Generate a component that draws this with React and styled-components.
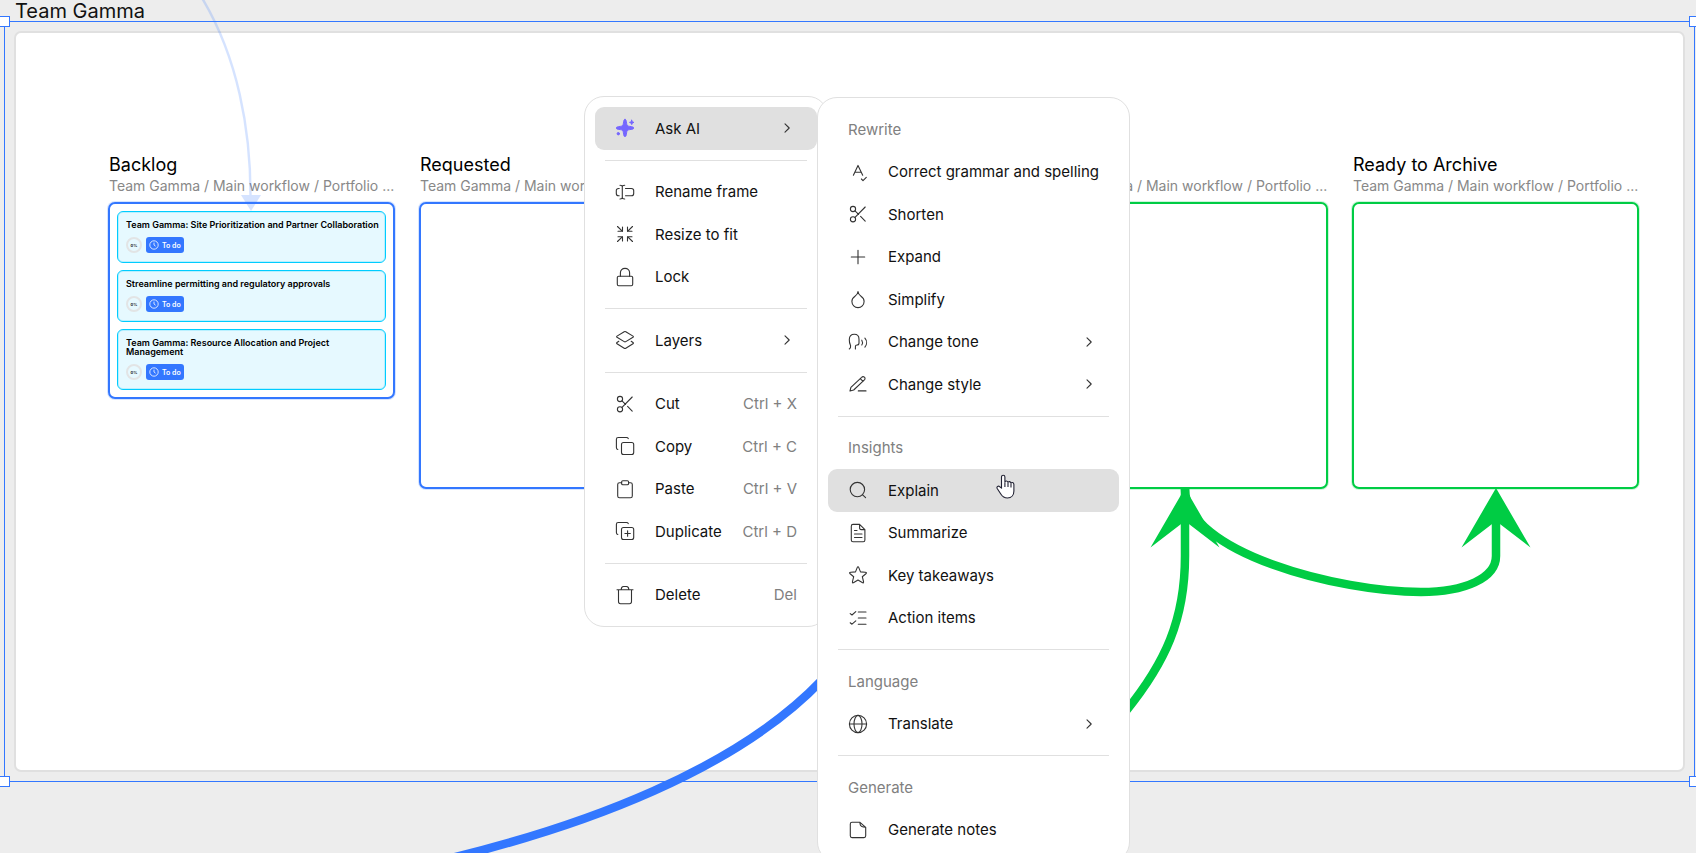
import React from "react";
import styled, { createGlobalStyle } from "styled-components";

const BLUE = "#3377ff";
const GREEN = "#00cc44";

const GlobalStyle = createGlobalStyle`
  * { box-sizing: border-box; }
  body {
    margin: 0;
    background: #ededed;
    font-family: Inter, "Liberation Sans", sans-serif;
    color: #111;
  }
`;

/* ---------- canvas ---------- */

const Canvas = styled.main`
  position: relative;
  display: flex;
  flex-direction: column;
  min-height: 100vh;
  padding: 0 11px 81px 14px;
  overflow: hidden;
  background: #ededed;
`;

const FrameTitle = styled.h1`
  margin: 0;
  padding-left: 1px;
  height: 31px;
  font-size: 20px;
  font-weight: 400;
  line-height: 22px;
`;

const Frame = styled.section`
  position: relative;
  flex: 1;
  padding: 121px 44px 40px 92px;
  border: 2px solid #e0e0e0;
  border-radius: 7px;
  background: #fff;
`;

const Selection = styled.div`
  position: absolute;
  inset: -12px;
  border: 1px solid ${BLUE};
  pointer-events: none;
`;

const Handle = styled.span`
  position: absolute;
  width: 11px;
  height: 11px;
  border: 1px solid ${BLUE};
  background: #fff;
  ${(p) => p.$v}: -6px;
  ${(p) => p.$h}: -6px;
`;

const Columns = styled.div`
  display: grid;
  grid-template-columns: repeat(5, 1fr);
  column-gap: 24px;
  align-items: start;
`;

const Column = styled.article`
  grid-column: ${(p) => p.$slot};
  grid-row: 1;
  min-width: 0;
`;

const ColumnTitle = styled.h2`
  margin: 0;
  padding-left: 1px;
  min-height: 22px;
  font-size: 18px;
  font-weight: 400;
  line-height: 22px;
  color: #000;
`;

const ColumnPath = styled.p`
  margin: 0 0 6px;
  padding-left: 1px;
  font-size: 14px;
  line-height: 20px;
  color: #888;
  white-space: nowrap;
`;

const ColumnBox = styled.div`
  display: flex;
  flex-direction: column;
  gap: 7px;
  padding: 7px;
  border: 2px solid ${(p) => p.$color};
  border-radius: 7px;
  background: #fff;
  box-shadow: 0 0 0 1px ${(p) => p.$color}33;
  ${(p) => p.$square && "aspect-ratio: 1;"}
`;

const Card = styled.div`
  display: flex;
  flex-direction: column;
  gap: 8px;
  padding: 8px 4px 9px 8px;
  border: 1px solid #00ccff;
  border-radius: 6px;
  background: #e6f9ff;
  box-shadow: inset 0 0 0 1px #00ccff33;
`;

const CardTitle = styled.h3`
  margin: 0;
  font-size: 9px;
  font-weight: 600;
  line-height: 9px;
  color: #000;
`;

const CardMeta = styled.div`
  display: flex;
  gap: 4px;
`;

const Progress = styled.span`
  display: grid;
  place-items: center;
  width: 16px;
  height: 16px;
  border: 2px solid #e2e4e5;
  border-radius: 50%;
  font-size: 4px;
  font-weight: 700;
`;

const Status = styled.span`
  display: flex;
  align-items: center;
  gap: 3px;
  height: 16px;
  padding: 0 3px;
  border-radius: 3px;
  background: ${BLUE};
  color: #fff;
  font-size: 7px;
  font-weight: 600;
`;

const Connectors = styled.svg`
  position: absolute;
  top: 0;
  left: 0;
  pointer-events: none;
`;

/* ---------- menus ---------- */

const Menu = styled.div`
  position: absolute;
  top: ${(p) => p.$top}px;
  left: ${(p) => p.$left}px;
  display: flex;
  flex-direction: column;
  width: ${(p) => p.$width}px;
  height: ${(p) => p.$height}px;
  padding: 10px;
  border: 1px solid #e0e0e0;
  border-radius: 20px;
  background: #fff;
`;

const Divider = styled.hr`
  flex: none;
  height: 1px;
  margin: 10px;
  border: 0;
  background: #e0e0e0;
`;

const MenuHeading = styled.h4`
  flex: 1;
  display: flex;
  align-items: center;
  margin: 0;
  padding: 0 20px;
  font-size: 15px;
  font-weight: 400;
  color: #808080;
`;

const Item = styled.button`
  flex: 1;
  display: flex;
  align-items: center;
  gap: 20px;
  padding: 0 20px;
  border: 0;
  border-radius: 9px;
  background: ${(p) => (p.$active ? "#e0e0e0" : "transparent")};
  color: #111;
  font: inherit;
  font-size: 15px;
  text-align: left;
  white-space: nowrap;
  cursor: pointer;
`;

const ItemLabel = styled.span`
  flex: 1;
`;

const Shortcut = styled.kbd`
  font: inherit;
  color: #808080;
`;

const IconSvg = styled.svg`
  flex: none;
  fill: none;
  stroke: #333;
  stroke-width: 1.1;
  stroke-linecap: round;
  stroke-linejoin: round;
`;

const Pointer = styled.svg`
  position: absolute;
  top: 376px;
  left: 178px;
  pointer-events: none;
`;

const ICONS = {
  ai: (
    <g fill="#7566ff" stroke="#7566ff" strokeWidth="1">
      <path d="M10 1.4C11.2 1.4 11.3 3 11.6 5.2C11.9 7.4 12.6 8.1 14.8 8.4C17 8.7 18.7 8.8 18.7 10S17 11.3 14.8 11.6C12.6 11.9 11.9 12.6 11.6 14.8C11.3 17 11.2 18.6 10 18.6S8.7 17 8.4 14.8C8.1 12.6 7.4 11.9 5.2 11.6C3 11.3 1.3 11.2 1.3 10S3 8.7 5.2 8.4C7.4 8.1 8.1 7.4 8.4 5.2C8.7 3 8.8 1.4 10 1.4Z" />
      <path d="M16.7 2.2L17.3 3.8L18.9 4.4L17.3 5L16.7 6.6L16.1 5L14.5 4.4L16.1 3.8Z" />
      <circle cx="3.3" cy="15.7" r="1.2" />
    </g>
  ),
  rename: (
    <>
      <path d="M5 3.3C6.4 3.3 7.3 3.8 7.3 4.8V15.6C7.3 16.5 6.4 17 5 17M9.7 3.3C8.2 3.3 7.3 3.8 7.3 4.8M9.7 17C8.2 17 7.3 16.5 7.3 15.6" />
      <path d="M4.2 6.5H3.7C2 6.5 1.3 7.6 1.3 8.6V11.4C1.3 12.8 2 13.7 3.7 13.7H4.2M10.5 6.5H16.4C18 6.5 18.7 7.4 18.7 8.6V11.4C18.7 12.8 18 13.7 16.4 13.7H10.5" />
    </>
  ),
  resize: (
    <path d="M2.5 2.5L7.5 7.3M3 7.3H7.5V3M17.5 2.5L12.5 7.3M17 7.3H12.5V3M2.5 17.5L7.5 12.7M3 12.7H7.5V17M17.5 17.5L12.5 12.7M17 12.7H12.5V17" />
  ),
  lock: (
    <>
      <rect x="2.3" y="9.2" width="15.4" height="9.5" rx="1.4" />
      <path d="M5.4 9.2V5.8C5.4 3 7.3 1.4 10 1.4S14.6 3 14.6 5.8V9.2" />
    </>
  ),
  layers: (
    <path d="M9.2 1.8Q10 1.3 10.8 1.8L18 6.1Q18.8 6.7 18 7.3L10.8 11.6Q10 12.1 9.2 11.6L2 7.3Q1.2 6.7 2 6.1ZM3.8 11.3L2 12.5Q1.2 13.2 2 13.7L9.2 18.2Q10 18.7 10.8 18.2L18 13.7Q18.8 13.2 18 12.5L16.2 11.3" />
  ),
  scissors: (
    <>
      <circle cx="5" cy="5" r="2.6" />
      <circle cx="5" cy="15.3" r="2.6" />
      <path d="M7 6.8L10.6 10.3M17.2 3L7 13.4M12.6 12.4L17.2 17.2" />
    </>
  ),
  copy: (
    <>
      <rect x="6.5" y="6.5" width="12.2" height="12" rx="2" />
      <path d="M2.8 13.5C1.7 13.2 1.4 12.5 1.4 11.5V3.2C1.4 2 2 1.5 3.2 1.5H11.5C12.5 1.5 13 1.7 13.3 2.6" />
    </>
  ),
  paste: (
    <>
      <path d="M6.7 3.7H4.5C3.2 3.7 2.7 4.4 2.7 5.5V17C2.7 18.2 3.3 18.8 4.5 18.8H15.5C16.7 18.8 17.3 18.2 17.3 17V5.5C17.3 4.4 16.7 3.7 15.5 3.7H13.5" />
      <rect x="6.6" y="1.7" width="7" height="4" rx="1.3" />
    </>
  ),
  duplicate: (
    <>
      <rect x="6.5" y="6.5" width="12.2" height="12" rx="2" />
      <path d="M2.8 13.5C1.7 13.2 1.4 12.5 1.4 11.5V3.2C1.4 2 2 1.5 3.2 1.5H11.5C12.5 1.5 13 1.7 13.3 2.6M12.6 9.8V15.2M9.9 12.5H15.3" />
    </>
  ),
  trash: (
    <path d="M2 4.7H18M3.5 4.7V16.6C3.5 18 4.2 18.7 5.5 18.7H14.5C15.8 18.7 16.5 18 16.5 16.6V4.7M6.2 4.7C6.2 2.4 7 1.5 8.5 1.5H11.5C13 1.5 13.8 2.4 13.8 4.7" />
  ),
  grammar: (
    <path d="M5.4 13.3L10 3.4L14.7 13.3M7 10.2H13.1M13.4 17L15 18.6L18.3 15.4" />
  ),
  plus: <path d="M10 3.3V16.7M3.3 10H16.7" />,
  drop: (
    <path d="M10 2.5C10.2 4.8 11 6 13 7.3C15 8.6 16.1 10.4 16.1 12.5A6.1 6.1 0 0 1 3.9 12.5C3.9 10.4 5 8.6 7 7.3C9 6 9.8 4.8 10 2.5Z" />
  ),
  tone: (
    <path d="M1.3 17C2.3 16.4 2.8 15.2 2.6 13.7C1.7 11.7 1.2 9.6 1.3 7.4C1.4 4.3 3.4 2.3 6.3 2.3C9.3 2.3 11 4.3 11 7.3V11C11 12.3 10.3 13 9 13C7.8 13 7.4 13.6 7.4 14.5V17M13.8 8.2C14.6 9.5 14.6 11.6 13.8 13M16.9 6.2C19.1 8.8 19.1 12.5 16.9 15.1" />
  ),
  pen: (
    <path d="M2 17L2.9 13.3L13.6 3.3C14.5 2.4 15.5 2.4 16.4 3.2C17.3 4.1 17.2 5.1 16.4 5.9L5.7 16ZM12.3 4.7L15 7.3M10.3 16.9H18" />
  ),
  search: (
    <>
      <circle cx="9.4" cy="9.6" r="7.2" />
      <path d="M14.6 14.8L17.6 17.6" />
    </>
  ),
  doc: (
    <path d="M11.6 1.4H5C3.8 1.4 3.3 2.1 3.3 3.2V16.9C3.3 18 3.9 18.7 5 18.7H15.2C16.4 18.7 16.9 18 16.9 16.9V6.6ZM11.6 1.4V5C11.6 6.1 12.1 6.6 13.2 6.6H16.9M6.5 7.5H9M6.5 11H14M6.5 14.5H14" />
  ),
  star: (
    <path d="M10 1.8C10.4 1.8 10.6 2.1 10.8 2.6L12.5 6.9L17.2 7.3C18.6 7.4 18.8 8 17.9 8.8L14.3 11.7L15.5 16.5C15.8 17.8 15.3 18.2 14.2 17.5L10 15L5.8 17.5C4.7 18.2 4.2 17.8 4.5 16.5L5.7 11.7L2.1 8.8C1.2 8 1.4 7.4 2.8 7.3L7.5 6.9L9.2 2.6C9.4 2.1 9.6 1.8 10 1.8Z" />
  ),
  checklist: (
    <path d="M10.3 4H18M10.3 10H18M10.3 16.2H18M2.2 5.6L4 7L7.8 3.7M2.2 14.8L4 16.2L7.8 12.9" />
  ),
  globe: (
    <>
      <circle cx="10" cy="10" r="8.6" />
      <ellipse cx="10" cy="10" rx="4" ry="8.6" />
      <path d="M1.4 10H18.6" />
    </>
  ),
  note: (
    <path d="M12 2.3H4C2.8 2.3 2.3 2.9 2.3 4V15.8C2.3 17 2.9 17.6 4 17.6H16C17.2 17.6 17.7 17 17.7 15.8V7.3ZM12 2.3V3.8C12.2 6 13.2 7.2 17.7 7.3" />
  ),
  chevron: <path d="M8 5.8L12.2 10L8 14.2" />,
};

function Icon({ name }) {
  return (
    <IconSvg width="20" height="20" viewBox="0 0 20 20" aria-hidden="true">
      {ICONS[name]}
    </IconSvg>
  );
}

function MenuItem({ icon, label, shortcut, submenu, active }) {
  return (
    <Item type="button" role="menuitem" $active={active}>
      <Icon name={icon} />
      <ItemLabel>{label}</ItemLabel>
      {shortcut && <Shortcut>{shortcut}</Shortcut>}
      {submenu && <Icon name="chevron" />}
    </Item>
  );
}

const MAIN_MENU = [
  { items: [{ icon: "ai", label: "Ask AI", submenu: true, active: true }] },
  {
    items: [
      { icon: "rename", label: "Rename frame" },
      { icon: "resize", label: "Resize to fit" },
      { icon: "lock", label: "Lock" },
    ],
  },
  { items: [{ icon: "layers", label: "Layers", submenu: true }] },
  {
    items: [
      { icon: "scissors", label: "Cut", shortcut: "Ctrl + X" },
      { icon: "copy", label: "Copy", shortcut: "Ctrl + C" },
      { icon: "paste", label: "Paste", shortcut: "Ctrl + V" },
      { icon: "duplicate", label: "Duplicate", shortcut: "Ctrl + D" },
    ],
  },
  { items: [{ icon: "trash", label: "Delete", shortcut: "Del" }] },
];

const AI_MENU = [
  {
    heading: "Rewrite",
    items: [
      { icon: "grammar", label: "Correct grammar and spelling" },
      { icon: "scissors", label: "Shorten" },
      { icon: "plus", label: "Expand" },
      { icon: "drop", label: "Simplify" },
      { icon: "tone", label: "Change tone", submenu: true },
      { icon: "pen", label: "Change style", submenu: true },
    ],
  },
  {
    heading: "Insights",
    items: [
      { icon: "search", label: "Explain", active: true },
      { icon: "doc", label: "Summarize" },
      { icon: "star", label: "Key takeaways" },
      { icon: "checklist", label: "Action items" },
    ],
  },
  {
    heading: "Language",
    items: [{ icon: "globe", label: "Translate", submenu: true }],
  },
  {
    heading: "Generate",
    items: [{ icon: "note", label: "Generate notes" }],
  },
];

function MenuSections({ sections }) {
  return sections.map((section, i) => (
    <React.Fragment key={i}>
      {i > 0 && <Divider />}
      {section.heading && <MenuHeading>{section.heading}</MenuHeading>}
      {section.items.map((item) => (
        <MenuItem key={item.label} {...item} />
      ))}
    </React.Fragment>
  ));
}

const COLUMNS = [
  {
    slot: 1,
    title: "Backlog",
    color: BLUE,
    cards: [
      "Team Gamma: Site Prioritization and Partner Collaboration",
      "Streamline permitting and regulatory approvals",
      "Team Gamma: Resource Allocation and Project Management",
    ],
  },
  { slot: 2, title: "Requested", color: BLUE },
  { slot: 4, title: "", color: GREEN },
  { slot: 5, title: "Ready to Archive", color: GREEN },
];

function TaskCard({ title }) {
  return (
    <Card>
      <CardTitle>{title}</CardTitle>
      <CardMeta>
        <Progress>0%</Progress>
        <Status>
          <svg width="10" height="10" viewBox="0 0 10 10" fill="none" stroke="#fff" strokeWidth="0.8">
            <circle cx="5" cy="5" r="4.2" />
            <path d="M5 2.6V5L6.6 6.2" />
          </svg>
          To do
        </Status>
      </CardMeta>
    </Card>
  );
}

export default function App() {
  return (
    <>
      <GlobalStyle />
      <Canvas>
        <FrameTitle>Team Gamma</FrameTitle>
        <Frame>
          <Columns>
            {COLUMNS.map((c) => (
              <Column key={c.slot} $slot={c.slot}>
                <ColumnTitle>{c.title}</ColumnTitle>
                <ColumnPath>Team Gamma / Main workflow / Portfolio ...</ColumnPath>
                <ColumnBox $color={c.color} $square={!c.cards}>
                  {c.cards && c.cards.map((t) => <TaskCard key={t} title={t} />)}
                </ColumnBox>
              </Column>
            ))}
          </Columns>
          <Selection>
            <Handle $v="top" $h="left" />
            <Handle $v="top" $h="right" />
            <Handle $v="bottom" $h="left" />
            <Handle $v="bottom" $h="right" />
          </Selection>
        </Frame>

        <Connectors width="1696" height="853" viewBox="0 0 1696 853" fill="none" aria-hidden="true">
          <g opacity="0.2">
            <path d="M202 -2C238 58 250.5 130 250.5 195" stroke={BLUE} strokeWidth="2.4" />
            <path d="M241 195H261L251 211Z" fill={BLUE} />
          </g>
          <path d="M426 864C588 827 738 768 822 680" stroke={BLUE} strokeWidth="8.5" />
          <g stroke={GREEN} strokeWidth="8.5">
            <path d="M1185 489V556C1185 620 1165 663 1126 711" />
            <path d="M1185 489C1185 553 1340 592 1421 592C1465 592 1496 578 1496 556V515" />
          </g>
          <g fill={GREEN}>
            <path d="M1185 488L1219.5 547.5L1185 521L1150.5 547.5Z" />
            <path d="M1496 488L1530.5 547.5L1496 521L1461.5 547.5Z" />
          </g>
        </Connectors>

        <Menu role="menu" $top={96} $left={584} $width={244} $height={531}>
          <MenuSections sections={MAIN_MENU} />
        </Menu>
        <Menu role="menu" $top={97} $left={817} $width={313} $height={765}>
          <MenuSections sections={AI_MENU} />
          <Pointer width="20" height="26" viewBox="0 0 20 26" aria-hidden="true">
            <path
              d="M5.5 14V3C5.5 .6 8.9 .6 8.9 3V8.5C8.9 6.5 12 6.5 12 8.8C12 7 15 7.2 15 9.5C15 8 17.9 8.2 17.9 10.5V17C17.9 21 15.5 24 11.5 24C7.5 24 6.3 22.5 4.8 20L1.2 14.5C.2 12.4 2.4 11.6 3.7 12.7Z"
              fill="#fff"
              stroke="#223"
              strokeWidth="1.1"
            />
            <path d="M8.9 8.5V13M12 8.8V13M15 9.5V13.5" stroke="#223" strokeWidth="1.1" />
          </Pointer>
        </Menu>
      </Canvas>
    </>
  );
}
